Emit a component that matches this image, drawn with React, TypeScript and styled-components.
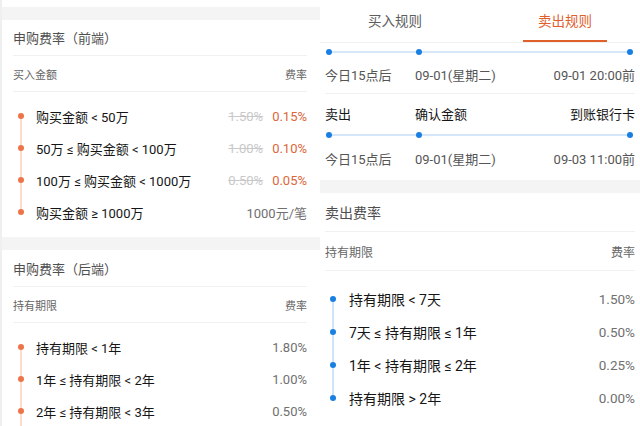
import styled, { createGlobalStyle } from "styled-components";

type Pos = "first" | "mid" | "last";

const GlobalStyle = createGlobalStyle`
  * { box-sizing: border-box; }
  body {
    margin: 0;
    background: #fff;
    font-family: Roboto, "Noto Sans CJK SC", sans-serif;
  }
`;

const Screen = styled.div`
  display: flex;
  width: 640px;
  height: 426px;
  overflow: hidden;
  background: #fff;
`;

const Panel = styled.div<{ $left?: boolean }>`
  width: 320px;
  display: flex;
  flex-direction: column;
  border-left: ${(p) => (p.$left ? "2px solid #efefef" : "none")};
`;

const Band = styled.div<{ $top?: number }>`
  flex: none;
  height: 13px;
  margin-top: ${(p) => p.$top ?? 0}px;
  background: #f4f4f4;
`;

const Inset = styled.div<{ $left?: boolean }>`
  margin: ${(p) => (p.$left ? "0 13px 0 11px" : "0 5px")};
`;

const Title = styled.div<{ $size: number; $h: number }>`
  height: ${(p) => p.$h}px;
  display: flex;
  align-items: center;
  border-bottom: 1px solid #f1f1f1;
  font-size: ${(p) => p.$size}px;
  color: #4f4f4f;
`;

const Head = styled.div<{ $size: number; $h: number }>`
  height: ${(p) => p.$h}px;
  display: flex;
  align-items: center;
  justify-content: space-between;
  border-bottom: 1px solid #f1f1f1;
  font-size: ${(p) => p.$size}px;
  color: #666;
`;

const List = styled.div<{ $pt: number; $pb: number }>`
  padding: ${(p) => p.$pt}px 0 ${(p) => p.$pb}px;
`;

const Row = styled.div<{ $h: number; $size: number; $gap: number }>`
  display: grid;
  grid-template-columns: 16px 1fr auto;
  column-gap: ${(p) => p.$gap}px;
  align-items: center;
  height: ${(p) => p.$h}px;
  font-size: ${(p) => p.$size}px;
  color: #161616;
`;

const Marker = styled.span<{ $pos: Pos; $dot: string; $line: string }>`
  align-self: stretch;
  display: flex;
  align-items: center;
  justify-content: center;
  background-image: linear-gradient(${(p) => p.$line}, ${(p) => p.$line});
  background-repeat: no-repeat;
  background-size: 2px ${(p) => (p.$pos === "mid" ? "100%" : "50%")};
  background-position: center ${(p) => (p.$pos === "first" ? "bottom" : "top")};

  &::after {
    content: "";
    width: 6px;
    height: 6px;
    border-radius: 50%;
    background: ${(p) => p.$dot};
  }
`;

const Rates = styled.span`
  display: flex;
  gap: 9px;
`;

const OldRate = styled.span`
  color: #c9c9c9;
  text-decoration: line-through;
`;

const Rate = styled.span<{ $accent?: boolean; $size?: number }>`
  color: ${(p) => (p.$accent ? "#e0663a" : "#707070")};
  font-size: ${(p) => (p.$size ? `${p.$size}px` : "inherit")};
`;

/* right side */

const Tabs = styled.div`
  display: flex;
  justify-content: space-between;
  height: 43px;
  padding: 0 33px;
  border-bottom: 1px solid #f1f1f1;
`;

const Tab = styled.div<{ $active?: boolean }>`
  width: 84px;
  height: 42px;
  display: flex;
  align-items: center;
  justify-content: center;
  font-size: 13.5px;
  color: ${(p) => (p.$active ? "#e0602c" : "#5e5e5e")};
  border-bottom: 2px solid ${(p) => (p.$active ? "#e0602c" : "transparent")};
`;

const Steps = styled.div<{ $pt: number; $pb: number; $border?: boolean }>`
  padding: ${(p) => p.$pt}px 0 ${(p) => p.$pb}px;
  border-bottom: ${(p) => (p.$border ? "1px solid #f1f1f1" : "none")};
`;

const StepGrid = styled.div`
  display: grid;
  grid-template-columns: 90px 1fr auto;
  align-items: center;
`;

const StepText = styled(StepGrid)<{ $strong?: boolean; $mt?: number }>`
  height: 20px;
  margin-top: ${(p) => p.$mt ?? 0}px;
  font-size: 13px;
  color: ${(p) => (p.$strong ? "#161616" : "#555")};
`;

const Track = styled(StepGrid)<{ $mt: number }>`
  height: 6px;
  margin-top: ${(p) => p.$mt}px;
  background: linear-gradient(#d4e6f7, #d4e6f7) center / calc(100% - 8px) 2px
    no-repeat;
`;

const Dot = styled.span<{ $end?: boolean }>`
  width: 6px;
  height: 6px;
  border-radius: 50%;
  background: #1a7fe3;
  justify-self: ${(p) => (p.$end ? "end" : "start")};
  margin: ${(p) => (p.$end ? "0 2px 0 0" : "0 0 0 1px")};
`;

const Right = styled.span`
  text-align: right;
`;

const ORANGE = { dot: "#ee7447", line: "#fcdccc" };
const BLUE = { dot: "#1a7fe3", line: "#cfe4f8" };

const frontRows = [
  { label: "购买金额 < 50万", old: "1.50%", now: "0.15%" },
  { label: "50万 ≤ 购买金额 < 100万", old: "1.00%", now: "0.10%" },
  { label: "100万 ≤ 购买金额 < 1000万", old: "0.50%", now: "0.05%" },
  { label: "购买金额 ≥ 1000万", fixed: "1000元/笔" },
];

const backRows = [
  { label: "持有期限 < 1年", rate: "1.80%" },
  { label: "1年 ≤ 持有期限 < 2年", rate: "1.00%" },
  { label: "2年 ≤ 持有期限 < 3年", rate: "0.50%" },
];

const sellRows = [
  { label: "持有期限 < 7天", rate: "1.50%" },
  { label: "7天 ≤ 持有期限 ≤ 1年", rate: "0.50%" },
  { label: "1年 < 持有期限 ≤ 2年", rate: "0.25%" },
  { label: "持有期限 > 2年", rate: "0.00%" },
];

function pos(i: number, n: number, open = false): Pos {
  if (i === 0) return "first";
  if (i === n - 1 && !open) return "last";
  return "mid";
}

function StepTrack({ mt }: { mt: number }) {
  return (
    <Track $mt={mt}>
      <Dot />
      <Dot />
      <Dot $end />
    </Track>
  );
}

export default function App() {
  return (
    <>
      <GlobalStyle />
      <Screen>
        <Panel $left>
          <Band $top={7} />
          <Inset $left>
            <Title $size={13} $h={36}>申购费率（前端）</Title>
            <Head $size={11} $h={36}>
              <span>买入金额</span>
              <span>费率</span>
            </Head>
            <List $pt={8} $pb={9}>
              {frontRows.map((r, i) => (
                <Row key={r.label} $h={32} $size={13} $gap={7}>
                  <Marker
                    $pos={pos(i, frontRows.length)}
                    $dot={ORANGE.dot}
                    $line={ORANGE.line}
                  />
                  <span>{r.label}</span>
                  {r.fixed ? (
                    <Rate>{r.fixed}</Rate>
                  ) : (
                    <Rates>
                      <OldRate>{r.old}</OldRate>
                      <Rate $accent>{r.now}</Rate>
                    </Rates>
                  )}
                </Row>
              ))}
            </List>
          </Inset>
          <Band />
          <Inset $left>
            <Title $size={13} $h={37}>申购费率（后端）</Title>
            <Head $size={11} $h={36}>
              <span>持有期限</span>
              <span>费率</span>
            </Head>
            <List $pt={8} $pb={0}>
              {backRows.map((r, i) => (
                <Row key={r.label} $h={32} $size={13} $gap={7}>
                  <Marker
                    $pos={pos(i, backRows.length, true)}
                    $dot={ORANGE.dot}
                    $line={ORANGE.line}
                  />
                  <span>{r.label}</span>
                  <Rate>{r.rate}</Rate>
                </Row>
              ))}
            </List>
          </Inset>
        </Panel>

        <Panel>
          <Tabs>
            <Tab>买入规则</Tab>
            <Tab $active>卖出规则</Tab>
          </Tabs>
          <Inset>
            <Steps $pt={6} $pb={9} $border>
              <StepTrack mt={0} />
              <StepText $mt={9}>
                <span>今日15点后</span>
                <span>09-01(星期二)</span>
                <Right>09-01 20:00前</Right>
              </StepText>
            </Steps>
            <Steps $pt={9} $pb={12}>
              <StepText $strong>
                <span>卖出</span>
                <span>确认金额</span>
                <Right>到账银行卡</Right>
              </StepText>
              <StepTrack mt={9} />
              <StepText $mt={10}>
                <span>今日15点后</span>
                <span>09-01(星期二)</span>
                <Right>09-03 11:00前</Right>
              </StepText>
            </Steps>
          </Inset>
          <Band />
          <Inset>
            <Title $size={14} $h={39}>卖出费率</Title>
            <Head $size={12} $h={39}>
              <span>持有期限</span>
              <span>费率</span>
            </Head>
            <List $pt={11} $pb={10}>
              {sellRows.map((r, i) => (
                <Row key={r.label} $h={33} $size={14} $gap={8}>
                  <Marker
                    $pos={pos(i, sellRows.length)}
                    $dot={BLUE.dot}
                    $line={BLUE.line}
                  />
                  <span>{r.label}</span>
                  <Rate $size={13.5}>{r.rate}</Rate>
                </Row>
              ))}
            </List>
          </Inset>
        </Panel>
      </Screen>
    </>
  );
}
